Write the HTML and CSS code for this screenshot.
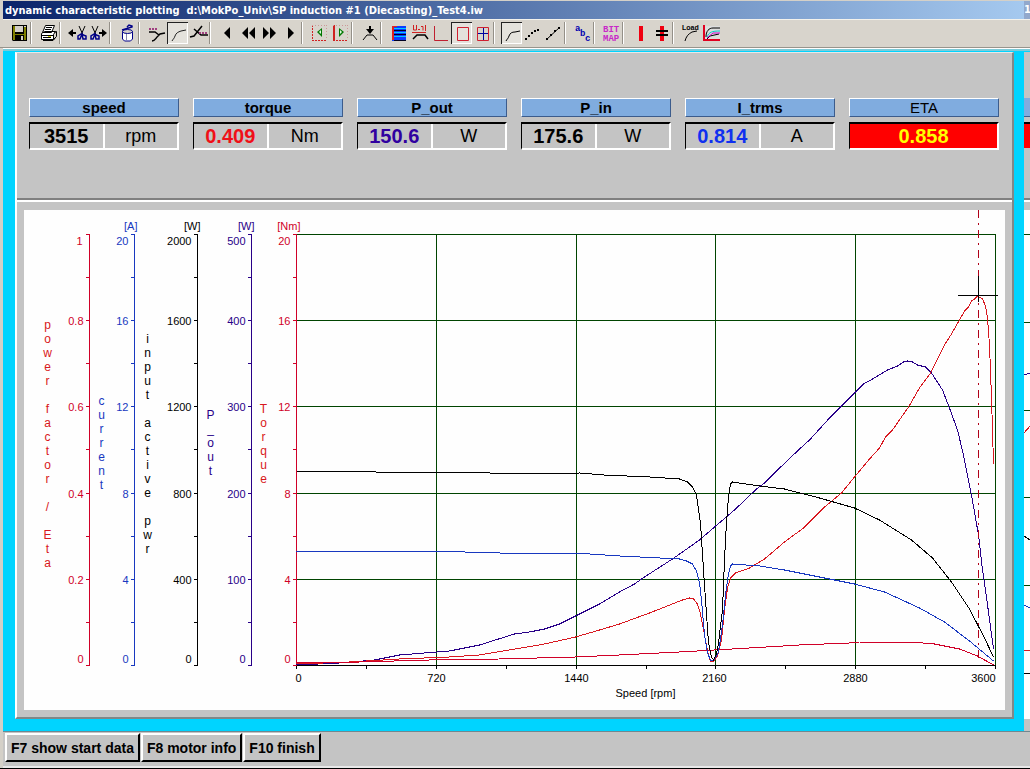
FILE: index.html
```html
<!DOCTYPE html>
<html lang="en">
<head>
<meta charset="utf-8">
<title>dynamic characteristic plotting</title>
<link rel="stylesheet" href="styles.css">
</head>
<body>
<header class="titlebar"><h1 class="title">dynamic characteristic plotting&nbsp; d:\MokPo_Univ\SP induction #1 (Diecasting)_Test4.iw</h1><span class="title-peer">1</span></header>

<nav class="toolbar" aria-label="Tools">
  <div class="group">
    <button class="tool" aria-label="Save"><svg viewBox="0 0 21 22"><path fill="#000" d="M3 3h15v16H4l-1-1z"/><path fill="#808000" d="M4 4h2v8h9V5h2v13H4z"/><path fill="#d4d0c8" d="M6 4h8v6H6zM15 4h2v1h-2zM12 14h2v4h-2z"/><path fill="#000" d="M6 13h9v5h-1v-4h-2v4H6z"/></svg></button>
  </div>
  <div class="group">
    <button class="tool" aria-label="Print"><svg viewBox="0 0 21 22"><path fill="#fff" stroke="#000" d="M7.500 3.500h9l-3 7h-9zM3.500 11.500l3-2h11l-2 3v5h-12z"/><path fill="none" stroke="#000" d="M8 5.500h6M7 7.500h6M3 13.500h12M5 15.500h8M15.500 17.500l3-3v-5l-2 1M5 18.500h10l2-2"/><path fill="#dd0" d="M10 14h3v1h-3z"/></svg></button>
  </div>
  <div class="group">
    <button class="tool" aria-label="Cut left"><svg viewBox="0 0 21 22"><path fill="none" stroke="#000" stroke-width="2" d="M3 11h6"/><path d="M1 11l5-4v8z"/><path fill="none" stroke="#000" d="M12 4l4 9M18 4l-4 9"/><path fill="none" stroke="#008" stroke-width="1.500" d="M14 12l-3 2v3h2l2-5 1 5h3v-3z"/></svg></button>
    <button class="tool" aria-label="Cut right"><svg viewBox="0 0 21 22"><path fill="none" stroke="#000" stroke-width="2" d="M11 11h6"/><path d="M19 11l-5-4v8z"/><path fill="none" stroke="#000" d="M4 4l4 9M10 4l-4 9"/><path fill="none" stroke="#008" stroke-width="1.500" d="M6 12l-3 2v3h2l2-5 1 5h3v-3z"/></svg></button>
  </div>
  <div class="group">
    <button class="tool" aria-label="Delete"><svg viewBox="0 0 21 22"><path fill="#fff" stroke="#008" d="M5.500 9v8l2 2h6l2-2V9"/><ellipse cx="10.500" cy="9.500" rx="5" ry="2" fill="#d4d0c8" stroke="#008"/><path fill="none" stroke="#008" stroke-width="1.500" d="M5 8l10-3v-1l-3-1-2 2"/><path stroke="#88a" d="M9.500 12v6"/></svg></button>
  </div>
  <div class="group">
    <button class="tool" aria-label="Left curve values"><svg viewBox="0 0 21 22"><path fill="none" stroke="#a04080" stroke-width="2" stroke-dasharray="2 1" d="M3 7h9"/><path fill="none" stroke="#000" stroke-width="1.500" d="M3 10h6l4 3M6 19c3 0 3-2 6-5l2-2 5-1"/></svg></button>
    <button class="tool pressed" aria-label="Curve" aria-pressed="true"><svg viewBox="0 0 21 22"><path fill="none" stroke="#222" d="M5 19c1-2 2-2 3-5s3-4 6-5l5-1"/></svg></button>
    <button class="tool" aria-label="Right curve values"><svg viewBox="0 0 21 22"><path fill="none" stroke="#000" stroke-width="1.500" d="M2 15l4-1 4-5 4-5M6 7l7 6h7"/><path fill="none" stroke="#a04080" stroke-width="2" stroke-dasharray="2 1" d="M11 11h8"/></svg></button>
  </div>
  <div class="group">
    <button class="tool" aria-label="Back"><svg viewBox="0 0 21 22"><path d="M13 5v12L7 11z"/></svg></button>
    <button class="tool" aria-label="Fast back"><svg viewBox="0 0 21 22"><path d="M10 5v12L4 11zM17 5v12l-6-6z"/></svg></button>
    <button class="tool" aria-label="Fast forward"><svg viewBox="0 0 21 22"><path d="M4 5v12l6-6zM11 5v12l6-6z"/></svg></button>
    <button class="tool" aria-label="Forward"><svg viewBox="0 0 21 22"><path d="M8 5v12l6-6z"/></svg></button>
  </div>
  <div class="group">
    <button class="tool" aria-label="Range start"><svg viewBox="0 0 21 22"><path fill="none" stroke="#d02020" stroke-dasharray="2 1" d="M3.500 3v16M3 18.500h15"/><path fill="none" stroke="#c99" stroke-dasharray="1 2" d="M3 3.500h15M17.500 3v15"/><path fill="#070" d="M13 6v9l-5-5z"/><path fill="#dfd" d="M12 8v4l-2-2z"/></svg></button>
    <button class="tool" aria-label="Range end"><svg viewBox="0 0 21 22"><path fill="none" stroke="#d02020" stroke-width="2" d="M4 3v15"/><path fill="none" stroke="#c99" stroke-dasharray="1 2" d="M3 3.500h13M17.500 3v15"/><path fill="none" stroke="#d02020" stroke-dasharray="2 1" d="M3 18.500h15"/><path fill="#070" d="M9 6v9l5-5z"/><path fill="#dfd" d="M10 8v4l2-2z"/></svg></button>
  </div>
  <div class="group">
    <button class="tool" aria-label="Insert point"><svg viewBox="0 0 21 22"><path fill="none" stroke="#000" stroke-width="2" d="M11 4v6"/><path d="M7 7h8l-4 5z"/><path fill="none" stroke="#000" d="M4 18l4-5h6l4 5"/></svg></button>
  </div>
  <div class="group">
    <button class="tool" aria-label="Table"><svg viewBox="0 0 21 22"><path fill="#0a3cff" d="M4 4h14v15H4z"/><path stroke="#0cf" d="M6 6.500h12M6 10.500h12M6 14.500h12"/><path stroke="#002" d="M6 8.500h12M6 12.500h12M6 18.500h12"/><path fill="#e02020" d="M4 4h2v14H4zM4 4h5v1H4z"/></svg></button>
    <button class="tool" aria-label="Labels"><svg viewBox="0 0 21 22"><path fill="none" stroke="#d02020" d="M4.500 3v5h3V3M9 7.500h2M12 4.500h2v4M16.500 3v6M3 10.500h14"/><path fill="none" stroke="#000" stroke-width="1.500" d="M4 17l4-4h8l3 4"/></svg></button>
    <button class="tool" aria-label="Axes"><svg viewBox="0 0 21 22"><path fill="none" stroke="#c02030" d="M4.500 4v14.500H18"/></svg></button>
    <button class="tool pressed" aria-label="Frame" aria-pressed="true"><svg viewBox="0 0 21 22"><path fill="none" stroke="#d02030" d="M6.500 5.500h11v13h-11z"/></svg></button>
    <button class="tool" aria-label="Grid"><svg viewBox="0 0 21 22"><path fill="none" stroke="#0000a0" d="M5 11.500h12M11.500 5v13"/><path fill="none" stroke="#d02030" d="M5.500 5.500h11v13h-11z"/></svg></button>
  </div>
  <div class="group">
    <button class="tool pressed" aria-label="Line" aria-pressed="true"><svg viewBox="0 0 21 22"><path fill="none" stroke="#000" d="M5 19c1-2 2-2 3-5s3-4 6-4l5-1"/></svg></button>
    <button class="tool" aria-label="Points"><svg viewBox="0 0 21 22"><path d="M3 16h2v2H3zM6 13h2v2H6zM9 10h2v2H9zM12 8h2v2h-2zM15 7h2v2h-2z"/></svg></button>
    <button class="tool" aria-label="Line with points"><svg viewBox="0 0 21 22"><path stroke="#000" d="M3 18L17 5"/><path d="M3 16h2v2H3zM7 12h2v2H7zM11 8h2v2h-2zM15 5h2v2h-2z"/></svg></button>
  </div>
  <div class="group">
    <button class="tool" aria-label="Text"><svg viewBox="0 0 21 22" class="icon-text blue"><text x="3" y="9">a</text><text x="8" y="14">b</text><text x="13" y="19">c</text></svg></button>
  </div>
  <div class="group">
    <button class="tool" aria-label="Bitmap"><svg viewBox="0 0 21 22" class="icon-text magenta"><text x="2" y="10">BIT</text><text x="2" y="19">MAP</text></svg></button>
  </div>
  <div class="group">
    <button class="tool" aria-label="Cursor"><svg viewBox="0 0 21 22"><path fill="#f00010" d="M9 4h4v15H9z"/></svg></button>
    <button class="tool" aria-label="Double cursor"><svg viewBox="0 0 21 22"><path fill="#f00010" d="M9 4h4v15H9z"/><path d="M5 8h12v2H5zM5 12h12v2H5z"/></svg></button>
  </div>
  <div class="group">
    <button class="tool" aria-label="Load"><svg viewBox="0 0 21 22" class="icon-text load"><text x="2" y="8">Load</text><path fill="none" stroke="#000" d="M5 19c1-4 3-7 7-9l5-1"/></svg></button>
    <button class="tool" aria-label="Compare curves"><svg viewBox="0 0 21 22"><path fill="#ddd" d="M4 4h15v13H4z"/><path fill="none" stroke="#000" d="M5 15c0-6 3-9 7-9h7M6 17l3-3 9-2"/><path stroke="#0cc" fill="none" d="M6 15c2-5 5-6 13-6"/><path stroke="#c0c" fill="none" d="M6 16l6-5h7"/><path fill="none" stroke="#e00020" stroke-width="2" d="M3 3v15h16"/></svg></button>
  </div>
</nav>

<main class="workspace">
  <div class="window">
    <section class="readouts" aria-label="Cursor values">
      <dl class="readout"><dt class="name">speed</dt><dd class="reading"><span class="value">3515</span><span class="unit">rpm</span></dd></dl>
      <dl class="readout"><dt class="name">torque</dt><dd class="reading"><span class="value red">0.409</span><span class="unit">Nm</span></dd></dl>
      <dl class="readout"><dt class="name">P_out</dt><dd class="reading"><span class="value indigo">150.6</span><span class="unit">W</span></dd></dl>
      <dl class="readout"><dt class="name">P_in</dt><dd class="reading"><span class="value">175.6</span><span class="unit">W</span></dd></dl>
      <dl class="readout"><dt class="name">I_trms</dt><dd class="reading"><span class="value blue">0.814</span><span class="unit">A</span></dd></dl>
      <dl class="readout"><dt class="name light">ETA</dt><dd class="reading alert"><span class="value">0.858</span></dd></dl>
    </section>
    <section class="plot">
      <svg class="chart" viewBox="25 210 980 500" role="img" aria-label="Motor characteristics against speed">
        <g class="grid">
          <path d="M296 234.500H996M296 320.500H996M296 406.500H996M296 493.500H996M296 579.500H996"/>
          <path d="M436.500 234V665M576.500 234V665M715.500 234V665M855.500 234V665M995.500 234V665"/>
        </g>
        <path class="axis black" d="M296 665.500H996M296.500 665V669M366.500 665V669M436.500 665V669M506.500 665V669M576.500 665V669M646.500 665V669M715.500 665V669M785.500 665V669M855.500 665V669M925.500 665V669M995.500 665V669"/>
        <defs><path id="scale" d="M.5 234V666M-3 234.500H1M-3 277.500H1M-3 320.500H1M-3 363.500H1M-3 406.500H1M-3 449.500H1M-3 493.500H1M-3 536.500H1M-3 579.500H1M-3 622.500H1M-3 665.500H1"/></defs>
        <use class="axis crimson" href="#scale" x="89"/>
        <use class="axis blue" href="#scale" x="134"/>
        <use class="axis black" href="#scale" x="197"/>
        <use class="axis indigo" href="#scale" x="251"/>
        <use class="axis crimson" href="#scale" x="296"/>

        <g class="label end crimson"><text x="83" y="245">1</text><text x="84" y="325">0.8</text><text x="84" y="411">0.6</text><text x="84" y="498">0.4</text><text x="84" y="584">0.2</text><text x="84" y="663">0</text></g>
        <g class="label end blue"><text x="138" y="230">[A]</text><text x="129" y="245">20</text><text x="129" y="325">16</text><text x="129" y="411">12</text><text x="129" y="498">8</text><text x="129" y="584">4</text><text x="129" y="663">0</text></g>
        <g class="label end black"><text x="201" y="230">[W]</text><text x="192" y="245">2000</text><text x="192" y="325">1600</text><text x="192" y="411">1200</text><text x="192" y="498">800</text><text x="192" y="584">400</text><text x="192" y="663">0</text></g>
        <g class="label end indigo"><text x="255" y="230">[W]</text><text x="246" y="245">500</text><text x="246" y="325">400</text><text x="246" y="411">300</text><text x="246" y="498">200</text><text x="246" y="584">100</text><text x="246" y="663">0</text></g>
        <g class="label end crimson"><text x="301" y="230">[Nm]</text><text x="291" y="245">20</text><text x="291" y="325">16</text><text x="291" y="411">12</text><text x="291" y="498">8</text><text x="291" y="584">4</text><text x="291" y="663">0</text></g>
        <g class="label middle black"><text x="299" y="682">0</text><text x="437" y="682">720</text><text x="577" y="682">1440</text><text x="715" y="682">2160</text><text x="856" y="682">2880</text><text x="984" y="682">3600</text><text x="646" y="697">Speed [rpm]</text></g>

        <g class="caption">
          <text class="red" x="48" y="318">power factor / Eta</text>
          <text class="blue" x="102" y="394">current</text>
          <text class="black" x="148" y="332">input active pwr</text>
          <text class="indigo" x="211" y="408">P_out</text>
          <text class="red" x="264" y="402">Torque</text>
        </g>

        <g class="curves">
          <polyline class="indigo" points="297,665 340,663 375,660 400,655 425,653 450,651 480,645 515,634 530,632 545,629 560,624 576,616 600,604 620,592 635,584 645,577 673,559 700,540 715,527 735,510 757,489 765,483 776,472 800,449 810,440 830,418 850,398 864,384 873,379 888,370 898,366 904,362 908,361 913,362 918,365 926,367 932,373 943,390 950,408 958,430 964,455 972,495 979,535 983,570 986,590 994,649"/>
          <polyline class="red" points="297,664 350,662 400,659 450,657 480,655 510,650 545,644 576,637 600,630 620,624 650,613 683,600 690,598 694,599 698,604 701,614 705,635 709,655 711,661 714,662 718,656 722,640 725,610 728,588 731,578 736,573 750,568 765,559 785,542 804,528 825,507 842,493 855,477 870,459 880,448 886,437 893,430 909,407 920,388 931,373 945,345 952,334 960,320 965,311 969,307 972,301 975,299 978,296 983,299 986,306 988,318 990,345 992,398 993,430 994,464"/>
          <polyline class="crimson" points="297,663 360,662 430,660 500,659 576,657 620,655 680,652 715,650 750,648 800,645 850,643 860,642 912,642 935,644 960,649 978,656 994,665"/>
          <polyline class="blue" points="297,552 301,551 430,551 500,553 576,553 620,556 680,559 687,561 693,564 697,571 700,583 702,600 705,635 708,653 711,660 714,661 719,652 723,625 726,595 729,574 731,566 733,564 760,566 785,570 820,577 855,584 885,592 920,608 945,622 970,641 994,661"/>
          <polyline class="black" points="297,471 370,471 376,472 470,472 490,473 530,474 580,473 604,475 650,477 680,479 688,482 693,487 697,495 701,523 705,585 709,643 712,657 714,660 717,654 719,643 723,610 725,560 727,522 729,497 731,484 733,482 760,486 785,489 820,498 855,508 880,520 912,540 933,558 952,582 970,609 985,638 994,657"/>
        </g>
        <path class="marker" d="M978.500 210V660"/>
        <path class="cross" d="M958 295.500H998M978.500 276V302"/>
      </svg>
    </section>
  </div>
  <aside class="peer" aria-hidden="true">
    <div class="peer-readouts"><div class="peer-name"></div><div class="peer-value"></div></div>
    <div class="peer-plot">
      <svg class="chart" viewBox="0 0 6 508" preserveAspectRatio="xMinYMin"><path class="grid" d="M0 24.500H6M0 112.500H6M0 200.500H6M0 287.500H6M0 375.500H6"/><path class="axis black" d="M0 463.500H6M0 326l6 4"/><path class="axis indigo" d="M0 165l6-2"/><path class="axis red" d="M0 223l6-7M0 440.500h6"/><path class="axis blue" d="M0 395l6 3"/></svg>
    </div>
  </aside>
</main>

<footer class="actions">
  <button class="action">F7 show start data</button>
  <button class="action">F8 motor info</button>
  <button class="action">F10 finish</button>
</footer>
</body>
</html>
```
FILE: styles.css
```css
* { box-sizing: border-box; }

body {
  margin: 0;
  height: 100vh;
  display: flex;
  flex-direction: column;
  overflow: hidden;
  background: #d4d0c8;
  border-bottom: 1px solid #000;
  font-family: "Liberation Sans", Arial, sans-serif;
}

.titlebar {
  display: flex;
  justify-content: space-between;
  align-items: center;
  height: 20px;
  margin-left: 3px;
  border-top: 1px solid #d4d0c8;
  border-bottom: 1px solid #f4f2ec;
  background: linear-gradient(90deg, #0a246a, #a6caf0);
  color: #fff;
  font: bold 11px "DejaVu Sans Condensed", "DejaVu Sans", sans-serif;
}
.title { margin: 0; padding-left: 2px; font: inherit; white-space: nowrap; }
.title-peer { width: 6px; overflow: hidden; background: #92a8cc; line-height: 18px; }

.toolbar {
  display: flex;
  align-items: center;
  height: 28px;
  padding: 0 0 1px 1px;
  border-bottom: 1px solid #98948c;
  background: #d8d4cc;
}
.group {
  display: flex;
  padding-left: 8px;
  box-shadow: 1px 0 #949088, 2px 0 #fff;
}
.group:last-child { box-shadow: none; }
.tool {
  width: 21px;
  height: 22px;
  padding: 0;
  border: 0;
  background: none;
}
.tool svg { display: block; width: 21px; height: 22px; }
.tool.pressed {
  background: #e4e2dc;
  box-shadow: inset 1px 1px #222, inset -1px -1px #fff;
}
.icon-text { font: bold 9px "Liberation Mono", monospace; }
.icon-text.blue { fill: #0000b0; }
.icon-text.magenta { fill: #c828c8; }
.icon-text.load { font: bold 7px "Liberation Sans", sans-serif; }

.workspace {
  flex: 1;
  min-height: 0;
  display: flex;
  margin-left: 3px;
  padding-top: 3px;
  border-top: 1px solid #fff;
  background: linear-gradient(#7ccbd8 2px, #00d4ff 2px);
}
.window {
  flex: 1;
  display: flex;
  flex-direction: column;
  margin: 0 10px 12px 12px;
  background: #c4c4c4;
  border: solid;
  border-width: 1px 2px 2px;
  border-color: #e8e8e8 #808888 #808888 #fff;
}

.readouts {
  display: grid;
  grid-template-columns: repeat(6, 1fr);
  gap: 14px;
  height: 147px;
  padding: 45px 13px 0 12px;
  border-bottom: 2px solid #808080;
}
.readout { margin: 0; }
.name {
  height: 19px;
  border: 1px solid;
  border-color: #fff #3c5c8c #3c5c8c #fff;
  background: #80acdf;
  font-size: 15px;
  font-weight: bold;
  line-height: 18px;
  text-align: center;
}
.name.light { font-weight: normal; }
.reading {
  display: flex;
  height: 28px;
  margin: 5px 0 0;
  border: solid;
  border-width: 2px 2px 2px 1px;
  border-color: #000 #fff #fff #000;
  line-height: 25px;
  text-align: center;
}
.value { flex: 1; font-size: 20px; font-weight: bold; }
.unit { flex: 1; border-left: 2px solid #fff; font-size: 18px; }
.alert { background: #f00; color: #ff0; }

.plot {
  flex: 1;
  min-height: 0;
  padding: 8px 7px 7px;
  border-top: 2px solid #fff;
}
.chart {
  display: block;
  width: 100%;
  height: 100%;
  background: #fefefe;
  shape-rendering: crispEdges;
}

.red { color: #f01018; }
.crimson { color: #d00028; }
.blue { color: #1030f0; }
.indigo { color: #3000a0; }
.black { color: #000; }
.chart .red { color: #d81820; }
.chart .blue { color: #1838c0; }
.chart .indigo { color: #280088; }

.grid { fill: none; stroke: #004400; }
.axis { fill: none; stroke: currentColor; }
.label { fill: currentColor; font-size: 11px; }
.end { text-anchor: end; }
.middle { text-anchor: middle; }
.caption {
  font-size: 12px;
  writing-mode: vertical-rl;
  text-orientation: upright;
}
.caption text { fill: currentColor; }
.curves polyline { fill: none; stroke: currentColor; stroke-linejoin: round; }
.marker { stroke: #b00018; stroke-dasharray: 8 5 2 5; }
.cross { stroke: #000; }

.peer { width: 6px; display: flex; flex-direction: column; background: #c4c4c4; }
.peer-readouts { height: 148px; padding-top: 46px; border-bottom: 2px solid #808080; }
.peer-name { height: 19px; background: #80acdf; border-bottom: 1px solid #3c5c8c; }
.peer-value { height: 26px; margin-top: 5px; border-top: 2px solid #000; background: #f00; }
.peer-plot { flex: 1; min-height: 0; padding: 8px 0 12px; border-top: 2px solid #fff; }

.actions {
  display: flex;
  gap: 1px;
  height: 37px;
  margin-left: 3px;
  padding: 1px 0 4px 2px;
  border-top: 1px solid #708890;
  border-bottom: 2px solid #e8e8e8;
  background: #c4c4c4;
}
.action {
  padding: 0 4px;
  border: 2px solid;
  border-color: #fff #000 #000 #fff;
  background: #c4c4c4;
  color: #000;
  font: bold 14px "Liberation Sans", Arial, sans-serif;
}
```
